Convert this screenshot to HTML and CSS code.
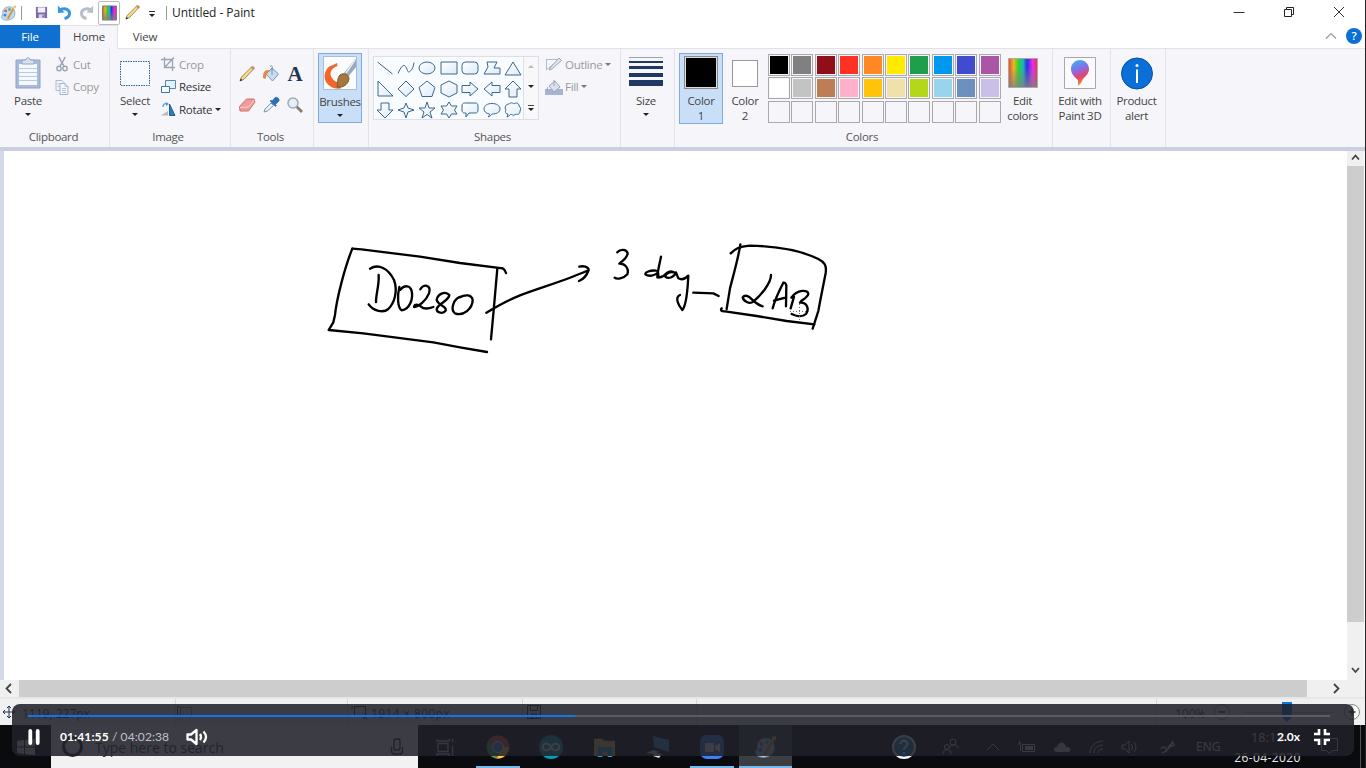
FILE: index.html
```html
<!DOCTYPE html>
<html lang="en">
<head>
<meta charset="utf-8">
<title>Untitled - Paint</title>
<link rel="stylesheet" href="styles.css">
</head>
<body>
<svg class="defs" width="0" height="0" aria-hidden="true">
  <defs>
    <linearGradient id="rain" x1="0" x2="1" y1="0" y2="0"><stop offset="0" stop-color="#e8402a"/><stop offset=".18" stop-color="#f5b623"/><stop offset=".34" stop-color="#2fd32c"/><stop offset=".5" stop-color="#19b8b6"/><stop offset=".64" stop-color="#2a2fe8"/><stop offset=".84" stop-color="#f02be8"/><stop offset="1" stop-color="#e8304a"/></linearGradient>
    <linearGradient id="fade" x1="0" x2="0" y1="0" y2="1"><stop offset=".3" stop-color="#808080" stop-opacity="0"/><stop offset="1" stop-color="#808080" stop-opacity=".8"/></linearGradient>
    <linearGradient id="pin" x1=".2" x2=".5" y1="0" y2="1"><stop offset="0" stop-color="#35b5f0"/><stop offset=".4" stop-color="#8a6be8"/><stop offset=".7" stop-color="#e8426a"/><stop offset="1" stop-color="#f5a623"/></linearGradient>
    <linearGradient id="shp" x1="0" x2="1" y1="0" y2="1"><stop offset="0" stop-color="#fff"/><stop offset="1" stop-color="#dcebf7"/></linearGradient>
    <symbol id="palette" viewBox="0 0 24 24"><path d="M21 13c0 5-4 8-9 9-5 .8-10-1-10-5 0-2 2-2 2-4S3 10 5 7c3-4 9-5 13-2 2 2 3 5 3 8z" fill="#b9dcf2" stroke="#6f9fc4"/><circle cx="8" cy="9" r="2" fill="#e25a4a"/><circle cx="13.500" cy="7" r="2" fill="#5cb85c"/><circle cx="7" cy="15" r="2" fill="#4f7fd8"/><circle cx="12" cy="18" r="2" fill="#f0c040"/><path d="M11 20 19 6" stroke="#e8892e" stroke-width="2.500"/><path d="m18 7 1-5 4-1-1 4z" fill="#e9c577"/></symbol>
    <symbol id="pencil" viewBox="0 0 18 18"><path d="m2 16 1.500-4L14 1.500l2 2L6 14.200z" fill="#f3dc8a" stroke="#86703f" stroke-width=".8"/><path d="m12.800 2.800 2.200 2.200L16.500 3.500c.5-1-1-2.500-2.200-2.200z" fill="#c98a78"/><path d="m1.800 16.200.9-2.600 1.700 1.700z" fill="#333"/></symbol>
  </defs>
</svg>

<div class="screen">
  <header class="titlebar">
    <svg class="app-icon" viewBox="0 0 24 24"><use href="#palette"/></svg>
    <span class="tsep"></span>
    <svg class="q save" viewBox="0 0 14 14"><path d="M1 1h12v12H1z" fill="#7d6aa8"/><path d="M3 1.500h8V7H3z" fill="#f3f0fa"/><path d="M4 9h6v4H4z" fill="#d9d3ea"/><path d="M8 10h1.500v2.500H8z" fill="#665490"/></svg>
    <svg class="q undo" viewBox="0 0 15 15"><path d="M3 5C8 2.500 13 4.500 12.500 9c-.3 2.500-2.500 4-5 4.500" fill="none" stroke="#3997e0" stroke-width="3"/><path d="M.8.5 1 8l6.500-.5z" fill="#3997e0"/></svg>
    <svg class="q redo" viewBox="0 0 15 15"><path d="M12 5C7 2.500 2 4.500 2.500 9c.3 2.500 2.500 4 5 4.500" fill="none" stroke="#b6bfcc" stroke-width="3"/><path d="M14.200.5 14 8l-6.500-.5z" fill="#b6bfcc"/></svg>
    <span class="qbox"><svg viewBox="0 0 16 16"><path d="M.5.500h15v15H.5z" fill="url(#rain)" stroke="#777"/><path d="M1 1h14v14H1z" fill="url(#fade)"/></svg></span>
    <svg class="q qpen" viewBox="0 0 18 18"><use href="#pencil"/></svg>
    <svg class="q qmore" viewBox="0 0 8 8"><path d="M1 1.500h6" stroke="#333"/><path d="M1 4h6L4 7z" fill="#222"/></svg>
    <span class="tsep two"></span>
    <span class="title">Untitled - Paint</span>
    <span class="wbtns">
      <svg viewBox="0 0 12 12"><path d="M.5 6.500h11" stroke="#333"/></svg>
      <svg viewBox="0 0 12 12"><path d="M1.500 3.500h7v7h-7z" fill="none" stroke="#222"/><path d="M3.500 3V1.500h7v7H9" fill="none" stroke="#222"/></svg>
      <svg viewBox="0 0 12 12"><path d="m1 1 10 10M11 1 1 11" stroke="#333"/></svg>
    </span>
  </header>

  <nav class="tabs">
    <span class="tab file">File</span><span class="tab home">Home</span><span class="tab view">View</span>
    <span class="tabs-right">
      <svg width="12" height="8" viewBox="0 0 12 8"><path d="m1 6.500 5-5 5 5" fill="none" stroke="#999" stroke-width="1.200"/></svg>
      <span class="help">?</span>
    </span>
  </nav>

  <section class="ribbon">
    <div class="group g-clip">
      <div class="body">
        <div class="big paste">
          <svg class="bi" viewBox="0 0 34 34"><path d="M5 4h24v28H5z" fill="#a9bbdb" stroke="#90a3c6"/><path d="M8 8h18v21H8z" fill="#f5f8fd"/><path d="M8 12.500h18M8 16.500h18M8 20.500h18M8 24.500h18" stroke="#b8cbe6"/><path d="M11 8V4h4c0-3 4-3 4 0h4v4z" fill="#d7dfec" stroke="#96a5bf"/></svg>
          <span>Paste</span><i class="arr"></i>
        </div>
        <div class="rows cutcopy">
          <div class="row dis"><svg viewBox="0 0 16 16"><path d="M5 1c1 3 3 6 5 9M11 1c-1 3-3 6-5 9" fill="none" stroke="#9ca6b8" stroke-width="1.500"/><circle cx="5" cy="12.500" r="2.200" fill="none" stroke="#9ca6b8" stroke-width="1.400"/><circle cx="11" cy="12.500" r="2.200" fill="none" stroke="#9ca6b8" stroke-width="1.400"/></svg><span>Cut</span></div>
          <div class="row dis"><svg viewBox="0 0 16 16"><path d="M2 1.500h6l2 2v8H2z" fill="#eef2f9" stroke="#b0bbcf"/><path d="M6 4.500h5l3 3v8H6z" fill="#f5f8fc" stroke="#a5b3cb"/><path d="M11 4.500v3h3M8 9.500h4M8 11.500h4M8 13.500h4M3.500 5h2M3.500 7.500h2" fill="none" stroke="#b5c2d8"/></svg><span>Copy</span></div>
        </div>
      </div>
      <div class="label">Clipboard</div>
    </div>

    <div class="group g-image">
      <div class="body">
        <div class="big select">
          <svg class="bi" viewBox="0 0 34 34"><path d="M2.500 5.500h29v24h-29z" fill="#f7fafe" stroke="#2b5c9b" stroke-dasharray="1.500 1"/></svg>
          <span>Select</span><i class="arr"></i>
        </div>
        <div class="rows imgrows">
          <div class="row dis"><svg viewBox="0 0 16 16"><path d="M1 3.500h11.500V15M4.500 1v10.500H15M14 1.500 5 11" fill="none" stroke="#98a4b8" stroke-width="1.300"/></svg><span>Crop</span></div>
          <div class="row"><svg viewBox="0 0 16 16"><path d="M5.500 1.500h10v8h-10z" fill="#e6f1fb" stroke="#4f87b8"/><path d="M1.500 7.500h8v6h-8z" fill="#fafdff" stroke="#3a77ad"/></svg><span>Resize</span></div>
          <div class="row"><svg viewBox="0 0 16 16"><path d="M9.500 3v11.500H15z" fill="#2f7cc0" stroke="#235f98"/><path d="M8 10v4.500H.5z" fill="#b5bac3"/><path d="M3 6c0-3 2-4 4-3" fill="none" stroke="#4b9cdc" stroke-width="1.400"/><path d="m6 1 3 2-3 2z" fill="#4b9cdc"/></svg><span>Rotate</span><i class="arr"></i></div>
        </div>
      </div>
      <div class="label">Image</div>
    </div>

    <div class="group g-tools">
      <div class="toolgrid">
        <svg viewBox="0 0 18 18"><use href="#pencil"/></svg>
        <svg viewBox="0 0 18 18"><path d="m4 9 6-6 6.500 6-6 7z" fill="#c6dff0" stroke="#7598b5"/><path d="M10 3v7M8 1.500c2-2 3 0 2 4" fill="none" stroke="#7598b5"/><path d="M1 13c0-5 1-8 5-8l3 1c-4 1-5 4-5 8z" fill="#e9864a"/></svg>
        <span class="atool">A</span>
        <svg viewBox="0 0 18 18"><path d="m1.500 10.500 7-7.500h7.500l1 3-6.500 9H2z" fill="#ee9c98" stroke="#cd716e"/><path d="m2 11.500 8.500-.5L16.500 4" fill="none" stroke="#fbd0cd"/></svg>
        <svg viewBox="0 0 18 18"><path d="m2 16 1-3 6-6 2.500 2.500-6 5.500z" fill="#e6f0f8" stroke="#8497a8"/><path d="m8 5 5.500 5.500 1-1-1-1L17 5c1-2-2-4.500-4-3.500L10 5 9 4z" fill="#2a70b8" stroke="#205a97" stroke-width=".5"/></svg>
        <svg viewBox="0 0 18 18"><path d="m10.500 10.500 5.500 5.500" stroke="#8c7a68" stroke-width="2.800"/><circle cx="7" cy="7" r="5" fill="#e2f1fa" stroke="#a3aab3" stroke-width="1.500"/></svg>
      </div>
      <div class="label">Tools</div>
    </div>

    <div class="group g-brush">
      <div class="big on">
        <svg class="bi" viewBox="0 0 34 34"><path d="M.5.500h33v33H.5z" fill="#fbfcfe" stroke="#a9bdd6"/><path d="m14 7 .5 3C9 12 6.500 16 8 20c1.500 4 5 6 9 7l1 5.500c-8 1-14-3-16-9C.5 17 4 10 10 9z" fill="#f2652c"/><path d="m21 17 11-14 1 1v7l-8 10z" fill="#99a7bd"/><path d="m23 17 9-13" stroke="#e9eef5" stroke-width="1.500"/><path d="M17 19c4-3 9 0 9 4-1 5-5 9-12 8 1-4 0-9 3-12z" fill="#a3783f" stroke="#7c5728"/></svg>
        <span>Brushes</span><i class="arr"></i>
      </div>
    </div>

    <div class="group g-shapes">
      <div class="shapes-body">
        <div class="gallery">
          <div class="cells">
            <svg viewBox="0 0 18 18"><path d="m1.500 3 15 12"/></svg>
            <svg viewBox="0 0 18 18"><path d="M1 14.500C3 10 6 4 8.500 7.500s2 7.500 5 4.500c2-2 3-5 3.500-8.500" fill="none"/></svg>
            <svg viewBox="0 0 18 18"><ellipse cx="9" cy="9" rx="8" ry="6"/></svg>
            <svg viewBox="0 0 18 18"><path d="M1 3h16v12H1z"/></svg>
            <svg viewBox="0 0 18 18"><rect x="1" y="3" width="16" height="12" rx="3.500"/></svg>
            <svg viewBox="0 0 18 18"><path d="M4 3h10l-3 6h6v6H1l4-7z"/></svg>
            <svg viewBox="0 0 18 18"><path d="m9 3 8 13H1z"/></svg>
            <svg viewBox="0 0 18 18"><path d="M2 1v15h15z"/></svg>
            <svg viewBox="0 0 18 18"><path d="m9 1 8 8-8 7.500L1 9z"/></svg>
            <svg viewBox="0 0 18 18"><path d="m9 1 8 6.500-3 9H4l-3-9z"/></svg>
            <svg viewBox="0 0 18 18"><path d="m9 1 8 4v8l-8 4-8-4V5z"/></svg>
            <svg viewBox="0 0 18 18"><path d="M1 5.500h8V2l8 7-8 7v-3.500H1z"/></svg>
            <svg viewBox="0 0 18 18"><path d="M17 5.500H9V2L1 9l8 7v-3.500h8z"/></svg>
            <svg viewBox="0 0 18 18"><path d="m9 1 8 8h-4v8H5V9H1z"/></svg>
            <svg viewBox="0 0 18 18"><path d="m9 17 8-8h-4V2H5v7H1z"/></svg>
            <svg viewBox="0 0 18 18"><path d="m9 2 2 5 6 2-6 2-2 6-2-6-6-2 6-2z"/></svg>
            <svg viewBox="0 0 18 18"><path d="m9 1 2 6h6l-5 4 2 6-5-3.500L4 17l2-6-5-4h6z"/></svg>
            <svg viewBox="0 0 18 18"><path d="m9 1 2.500 4H17l-2.500 4 2.500 4h-5.500L9 17l-2.500-4H1l2.500-4L1 5h5.500z"/></svg>
            <svg viewBox="0 0 18 18"><path d="M3.500 2h11C16 2 17 3 17 5v4c0 2-1 3-2.500 3H8l-3 4v-4H3.500C2 12 1 11 1 9V5c0-2 1-3 2.500-3z"/></svg>
            <svg viewBox="0 0 18 18"><path d="M5 16c1-1 1.500-2 1.500-3C3 12.500 1 10.500 1 8c0-3.500 3.500-5.500 8-5.500S17 4.500 17 8s-3.500 5-8 5c-1 1-2 2.500-4 3z"/></svg>
            <svg viewBox="0 0 18 18"><path d="M5 3c2-2 4-1 5 0 2-2 5-1 5 2 2 1 2 4 1 5 0 3-2 4-4 3-2 2-4 1-5 0-1 1-2 2-4 3l1-3C1 13 1 10 2 9 0 6 2 3 5 3z"/></svg>
          </div>
          <div class="gscroll"><i class="up"></i><i class="arr sm"></i><i class="more"><b class="arr sm"></b></i></div>
        </div>
        <div class="rows shaperows">
          <div class="row dis"><svg viewBox="0 0 18 16"><path d="M1 3.500h14M1.500 3v11M1 14 15 3" fill="none" stroke="#b4bac8"/><path d="m5 12 9-10 2.500 2.500L7 13l-3 1z" fill="#dfe3ec" stroke="#9fa8b9"/></svg><span>Outline</span><i class="arr"></i></div>
          <div class="row dis"><svg viewBox="0 0 18 16"><path d="M0 10h18v6H0z" fill="#a7b4d0"/><path d="m4 7 6-5 5 6-6 5z" fill="#dbe2ee" stroke="#98a5bd"/><path d="M9 1v6M3 8c-1 1-1 3 0 4" fill="none" stroke="#98a5bd"/></svg><span>Fill</span><i class="arr"></i></div>
        </div>
      </div>
      <div class="label">Shapes</div>
    </div>

    <div class="group g-size">
      <div class="big">
        <svg class="bi" viewBox="0 0 34 34"><path d="M0 1.500h34" stroke="#9aa3b2"/><path d="M0 6h34" stroke="#203864" stroke-width="2"/><path d="M0 11.500h34" stroke="#203864" stroke-width="3"/><path d="M0 19h34" stroke="#203864" stroke-width="4"/><path d="M0 27h34" stroke="#203864" stroke-width="6"/></svg>
        <span>Size</span><i class="arr"></i>
      </div>
    </div>

    <div class="group g-colors">
      <div class="colors-body">
        <div class="big on c1"><b class="sw1"></b><span>Color<br>1</span></div>
        <div class="big c2"><b class="sw2"></b><span>Color<br>2</span></div>
        <div class="swatches">
          <i class="k1"></i><i class="k2"></i><i class="k3"></i><i class="k4"></i><i class="k5"></i><i class="k6"></i><i class="k7"></i><i class="k8"></i><i class="k9"></i><i class="k10"></i>
          <i class="k11"></i><i class="k12"></i><i class="k13"></i><i class="k14"></i><i class="k15"></i><i class="k16"></i><i class="k17"></i><i class="k18"></i><i class="k19"></i><i class="k20"></i>
          <i></i><i></i><i></i><i></i><i></i><i></i><i></i><i></i><i></i><i></i>
        </div>
        <div class="big editc">
          <svg class="bi" viewBox="0 0 34 34"><path d="M2.500 2.500h29v29h-29z" fill="url(#rain)" stroke="#aaa"/><path d="M3 3h28v28H3z" fill="url(#fade)"/></svg>
          <span>Edit<br>colors</span>
        </div>
      </div>
      <div class="label">Colors</div>
    </div>

    <div class="group g-p3d">
      <div class="big">
        <svg class="bi" viewBox="0 0 34 34"><path d="M1.500 1.500h31v31h-31z" fill="#fafafc" stroke="#a8a8a8"/><path d="M17 4c5 0 9 4 9 9 0 4-3 7-6 10-1 2-2 5-5 7v-6c-4-3-7-7-7-11 0-5 4-9 9-9z" fill="url(#pin)"/></svg>
        <span>Edit with<br>Paint 3D</span>
      </div>
    </div>
    <div class="group g-alert">
      <div class="big">
        <svg class="bi" viewBox="0 0 34 34"><circle cx="17" cy="17.500" r="15.500" fill="#0a70d8" stroke="#0b4f9c"/><path d="M17 13.500V27" stroke="#fff" stroke-width="2"/><circle cx="17" cy="9.500" r="1.500" fill="#fff"/></svg>
        <span>Product<br>alert</span>
      </div>
    </div>
  </section>

  <main class="work">
    <svg class="canvas" viewBox="4 151 1343 529">
      <g fill="none" stroke="#000" stroke-width="7" stroke-linecap="round" stroke-linejoin="round">
        <g transform="translate(320 235) scale(.33333)">
          <path d="M97 41C75 95 50 190 45 240l-5 22-14 23 104 10 210 27 80 15 81 14"/>
          <path d="m97 41 28 2 175 22 120 19 128 16q8 4 10 14"/>
          <path d="m532 100-10 115-9 98"/>
          <path d="M150 101c25-16 55-1 72 34 13 35 0 70-17 87-15 13-45 6-59-14M176 120c2 30-8 55-8 81"/>
          <path d="M238 156c-6 25-6 62 7 70 24-2 35-35 30-58-4-17-22-19-34-4"/>
          <path d="M301 163c9-18 34-13 26 12-10 25-32 40-45 41 2-10 12-8 20-2q12 12 38 2"/>
          <path d="M388 180c-13-14-36-2-38 15 5 18 32 18 27 32-7 10-27 8-27-5 5-17 36-24 38-42z"/>
          <path d="M425 184c-25 5-35 40-20 51 25 10 53-15 53-40-3-17-23-17-38-8"/>
          <path d="M499 233c31-18 61-36 101-52 70-26 140-46 200-73M778 95c12-3 27 0 28 10-6 17-16 28-29 33"/>
        </g>
        <g transform="translate(570 235) scale(.33333)">
          <path d="M142 52c8-10 28-10 31 3-1 13-15 23-25 31 17-1 30 14 24 32-12 14-32 15-38 10"/>
          <path d="M273 65c-5 25-10 42-11 62M258 107c-18-2-33 5-32 11 9 7 30 5 38-6l2 16q15-2 22-12c8-8 18-7 24-4-12-3-27 3-26 13 10 9 28 0 32-13l7 18q15 8 30-8c-2 30-3 85-18 103-13-15-23-38-7-45"/>
          <path d="m370 173 60 2 16 8"/>
          <path d="M482 55c13-13 23-20 58-23 70 1 150 13 205 40 20 10 25 20 22 43-7 35-17 85-22 113l-17 53"/>
          <path d="M511 28c-6 42-21 92-31 132l-10 62M455 220c-5 5 0 10 10 9l95 14 90 15 83 10"/>
          <path d="M603 120c0 25-30 60-53 80-12 9-30-2-32-13 5-7 15-6 22 1 12 12 22 22 38 26"/>
          <path d="M608 220c5-20 18-50 32-77q6-2 9 8l-1 63M612 197l37-10"/>
          <path d="M672 185l-10 35M664 188c18-25 51-25 51-11-3 13-25 20-25 26 20-2 29 18 18 34-13 12-35 4-43 0"/>
        </g>
      </g>
      <path d="M790 311.500h20M799.500 301v21" stroke="#777" stroke-dasharray="1 2"/>
    </svg>
    <div class="vscroll">
      <svg viewBox="0 0 17 15"><path d="m5 8.500 3.500-4 3.500 4" fill="none" stroke="#444" stroke-width="1.800"/></svg>
      <i class="vthumb"></i>
      <svg viewBox="0 0 17 15"><path d="m5 5 3.500 4L12 5" fill="none" stroke="#444" stroke-width="1.800"/></svg>
    </div>
  </main>
  <div class="hscroll">
    <svg viewBox="0 0 19 17"><path d="m11 4-4.500 4.500L11 13" fill="none" stroke="#444" stroke-width="1.800"/></svg>
    <i class="hthumb"></i>
    <svg viewBox="0 0 19 17"><path d="m8 4 4.500 4.500L8 13" fill="none" stroke="#444" stroke-width="1.800"/></svg>
  </div>

  <div class="status">
    <div class="st s1"><svg width="14" height="14" viewBox="0 0 14 14"><path d="M7 1v12M1 7h12M5 3l2-2 2 2M5 11l2 2 2-2M3 5 1 7l2 2M11 5l2 2-2 2" fill="none" stroke="#20304c"/></svg><span>1119, 227px</span></div>
    <div class="st s2"><svg width="16" height="14" viewBox="0 0 16 14"><path d="M3.500 2.500h11v9h-11z" fill="none" stroke="#444" stroke-dasharray="1.500 1"/><path d="M.5 1v10M0 1.500h3" stroke="#555"/></svg></div>
    <div class="st s3"><svg width="16" height="14" viewBox="0 0 16 14"><path d="M3.500 1.500h11v10h-11zM1 1v3M12 13h4" fill="none" stroke="#333"/></svg><span>1914 × 800px</span></div>
    <div class="st s4"><svg width="14" height="14" viewBox="0 0 14 14"><path d="M.5.500h13v13H.5zM3.500.5v5h7v-5M4.500 13V9h5v4" fill="none" stroke="#333"/></svg></div>
    <div class="st s5"></div>
    <div class="st s6"><span>100%</span><svg class="zo" width="16" height="16" viewBox="0 0 16 16"><circle cx="8" cy="8" r="7.500" fill="#f7f7f7" stroke="#888"/><path d="M4.500 8h7" stroke="#333" stroke-width="1.500"/></svg><span class="track"><svg width="10" height="20" viewBox="0 0 10 20"><path d="M0 0h10v15l-5 5-5-5z" fill="#0a78e0"/></svg></span><svg width="16" height="16" viewBox="0 0 16 16"><circle cx="8" cy="8" r="7.500" fill="#f7f7f7" stroke="#888"/><path d="M4.500 8h7M8 4.500v7" stroke="#333" stroke-width="1.500"/></svg></div>
  </div>

  <footer class="taskbar">
    <div class="start"><svg width="18" height="16" viewBox="0 0 18 16"><path d="m0 2 7-1v6.500H0zM8 1l10-1v7.500H8zM0 8.500h7V15l-7-1zM8 8.500h10V16L8 15z" fill="#ddd"/></svg></div>
    <div class="search"><i class="cortana"></i><span>Type here to search</span><svg width="14" height="18" viewBox="0 0 14 18"><rect x="4" y="1" width="6" height="11" rx="2" fill="none" stroke="#222" stroke-width="1.300"/><path d="M1.500 9v4c0 2 1 3 3 3h5c2 0 3-1 3-3V9" fill="none" stroke="#222" stroke-width="1.300"/></svg></div>
    <div class="apps">
      <div class="app"><svg width="20" height="18" viewBox="0 0 20 18"><path d="M3 5.500h10v8H3zM2 1v2h12V1M2 18v-2h12v2M17.500 1v3M17.500 8v10" fill="none" stroke="#ccc" stroke-width="1.300"/></svg></div>
      <div class="app run a2"><svg width="24" height="24" viewBox="0 0 24 24"><circle cx="12" cy="12" r="11.500" fill="#e24a3b"/><path d="M12 12 2 7a11.500 11.500 0 0 0 9 16.500z" fill="#35a853"/><path d="M12 12h11a11.500 11.500 0 0 1-12 11.500l3-7z" fill="#f9d13a"/><circle cx="12" cy="12" r="5.500" fill="#4184f3" stroke="#fff"/></svg></div>
      <div class="app"><svg width="24" height="24" viewBox="0 0 24 24"><circle cx="12" cy="12" r="12" fill="#069fb6"/><path d="M12 12c-3-5-8-4-8 0s5 5 8 0 8-4 8 0-5 5-8 0z" fill="none" stroke="#fff" stroke-width="2"/></svg></div>
      <div class="app"><svg width="24" height="20" viewBox="0 0 24 22"><path d="M0 2h9l2 2h12v17H0z" fill="#e9c35b"/><path d="M4 11h16v11h-5v-6H9v6H4z" fill="#2b9de0"/></svg></div>
      <div class="app"><svg width="24" height="24" viewBox="0 0 24 24"><path d="m7 1 16 4v12L8 12z" fill="#3b94e0"/><path d="m0 18 8-3 5 2-3 1 6 1-3 4-6-2 1-2z" fill="#ddd"/></svg></div>
      <div class="app run"><svg width="24" height="24" viewBox="0 0 24 24"><rect width="24" height="24" rx="7" fill="#3b82f6"/><path d="M5 8h9v9H5zM15 11l5-3v9l-5-3z" fill="#fff"/></svg></div>
      <div class="app run act"><svg width="25" height="24" viewBox="0 0 24 24"><use href="#palette"/></svg></div>
    </div>
    <div class="tray">
      <svg class="t1" width="24" height="24" viewBox="0 0 24 24"><circle cx="12" cy="12" r="11" fill="#1583c8" stroke="#fff" stroke-width="2"/><path d="M8.500 9c0-5 7-4 7 0 0 2.500-3.500 3-3.500 6M12 17v2.500" fill="none" stroke="#fff" stroke-width="2.300"/></svg>
      <svg class="t2" width="17" height="17" viewBox="0 0 17 17"><g fill="none" stroke="#ddd"><circle cx="5" cy="9" r="2.500"/><path d="M1 16c0-6 8-6 8 0M8 9c1-3 8-3 8 1"/><circle cx="11" cy="4" r="3"/></g></svg>
      <svg class="t3" width="14" height="9" viewBox="0 0 14 9"><path d="m1 8 6-6 6 6" fill="none" stroke="#ddd"/></svg>
      <svg class="t4" width="18" height="12" viewBox="0 0 18 12"><path d="M4.500 3.500h12v7h-12z" fill="none" stroke="#ddd"/><path d="M7 5h8v4H7z" fill="#ddd"/><path d="M0 3h4M1.500 0v3M2.500 4v6" stroke="#ddd"/></svg>
      <svg class="t5" width="18" height="12" viewBox="0 0 18 12"><path d="M4 11C0 11 0 6 4 6c1-6 8-6 9 0 5-1 6 5 2 5z" fill="#ccc"/></svg>
      <svg class="t6" width="15" height="14" viewBox="0 0 15 14"><path d="M1 13C1 6 7 1 14 1M5 13c0-5 4-8 9-8M9 13c0-2 2-4 5-4" fill="none" stroke="#ddd"/></svg>
      <svg class="t7" width="17" height="14" viewBox="0 0 17 14"><path d="M1 5h3l4-4v12L4 9H1zM10.500 4q2 3 0 6M13 2q4 5 0 10" fill="none" stroke="#ddd"/></svg>
      <svg class="t8" width="16" height="14" viewBox="0 0 16 14"><path d="M2 13c6-2 9-7 11-12M1 9c3-5 7 0 5 3M8 7c3-3 5-5 6-3s-3 3-5 2" fill="none" stroke="#ddd" stroke-width="1.300"/></svg>
      <span class="lang">ENG</span>
      <span class="clock"><span>18:13</span><span>26-04-2020</span></span>
      <svg class="t9" width="17" height="17" viewBox="0 0 17 17"><path d="M.5.500h16v12h-5l-3 3-3-3h-5z" fill="none" stroke="#ddd"/></svg>
      <i class="peek"></i>
    </div>
  </footer>

  <div class="player">
    <div class="progress"><i></i></div>
    <div class="controls">
      <svg width="13" height="16" viewBox="0 0 13 16"><path d="M2.300 2v12M9.700 2v12" stroke="#fff" stroke-width="3.800" stroke-linecap="round"/></svg>
      <span class="time"><b>01:41:55</b> / 04:02:38</span>
      <svg class="vol" width="22" height="18" viewBox="0 0 22 18"><path d="M1.500 6.500H5l5.500-4.500v14L5 11.500H1.500z" fill="none" stroke="#fff" stroke-width="2.300" stroke-linejoin="round"/><path d="M14 6q2 3 0 6M17.500 3.500q5 5.500 0 11" fill="none" stroke="#fff" stroke-width="2.300"/></svg>
      <b class="speed">2.0x</b>
      <svg class="exit" width="16" height="16" viewBox="0 0 16 16"><path d="M5 0v5H0M11 0v5h5M5 16v-5H0M11 16v-5h5" fill="none" stroke="#fff" stroke-width="2.600"/></svg>
    </div>
  </div>
</div>
</body>
</html>
```
FILE: styles.css
```css
* { box-sizing: border-box; }
body { margin: 0; background: #fff; font: 12px/15px "Open Sans", "Noto Sans", sans-serif; color: #444; overflow: hidden; }
svg { display: block; flex: none; }
i { font-style: normal; display: block; }
.defs { position: absolute; }
.screen { width: 1366px; height: 768px; display: flex; flex-direction: column; position: relative; border-right: 1px solid #222; overflow: hidden; }

.titlebar { height: 25px; flex: none; display: flex; align-items: center; background: #fff; }
.app-icon { width: 17px; height: 18px; }
.tsep { width: 1px; height: 14px; background: #999; margin-left: 4px; }
.q { width: 15px; height: 15px; }
.save { width: 13px; height: 13px; margin-left: 13px; }
.undo { margin-left: 9px; }
.redo { margin-left: 7px; }
.qbox { width: 22px; height: 24px; margin-left: 4px; border: 1px solid #bbb; border-radius: 2px; display: flex; align-items: center; justify-content: center; }
.qbox svg { width: 15px; height: 16px; }
.qpen { width: 17px; height: 17px; margin-left: 4px; }
.qmore { width: 8px; height: 8px; margin: 3px 0 0 7px; }
.tsep.two { margin-left: 10px; }
.title { margin-left: 5px; color: #222; letter-spacing: -.05px; }
.wbtns { margin-left: auto; display: flex; gap: 38px; padding: 0 20px 2px 0; }
.wbtns svg { width: 12px; height: 12px; }

.tabs { height: 24px; flex: none; display: flex; background: #fff; border-bottom: 1px solid #e0e2e8; line-height: 24px; font-size: 11.500px; letter-spacing: -.15px; }
.tab { text-align: center; }
.file { width: 60px; background: #0f70cf; color: #fff; line-height: 23px; }
.home { width: 58px; height: 24px; background: #f6f6fa; border: 1px solid #e0e2e8; border-width: 1px 1px 0; line-height: 21px; }
.view { width: 54px; line-height: 23px; }
.tabs-right { margin-left: auto; display: flex; align-items: center; gap: 9px; padding: 0 3px 1px 0; }
.help { width: 16px; height: 16px; border-radius: 50%; background: #0a70d8; color: #fff; font-weight: 600; line-height: 16px; text-align: center; }

.ribbon { height: 102px; flex: none; display: flex; background: #f6f6fa; border-bottom: 4px solid #c9cfe0; font-size: 11.500px; letter-spacing: -.3px; }
.group { height: 98px; display: flex; flex-direction: column; position: relative; border-right: 1px solid #e3e4ea; }
.g-clip { width: 110px; } .g-image { width: 121px; } .g-tools { width: 83px; } .g-brush { width: 55px; padding: 4px 6px 0 4px; }
.g-shapes { width: 252px; } .g-size { width: 54px; } .g-colors { width: 378px; } .g-p3d { width: 58px; } .g-alert { width: 55px; }
.label { margin-top: auto; height: 20px; line-height: 19px; text-align: center; color: #555; }
.g-clip .label { padding-right: 2px; } .g-image .label { padding-right: 4px; } .g-tools .label { padding-right: 3px; } .g-shapes .label { padding-right: 4px; } .g-colors .label { padding-right: 3px; }
.body, .shapes-body, .colors-body { display: flex; }
.big { display: flex; flex-direction: column; align-items: center; padding-top: 7px; text-align: center; }
.big span { margin-top: 3px; white-space: nowrap; }
.bi { width: 34px; height: 34px; }
.arr { border: 3px solid transparent; border-top-color: #222; border-bottom: 0; height: 0; width: 0; }
.big .arr { margin-top: 5px; }
.paste { width: 56px; }
.rows { padding-top: 4px; }
.row { height: 22.5px; display: flex; align-items: center; color: #333; white-space: nowrap; }
.row svg { width: 16px; height: 16px; }
.row span { margin-left: 3px; }
.row .arr { margin-left: 3px; }
.dis { color: #999; }
.dis .arr { border-top-color: #777; }
.cutcopy { margin-left: -2px; }
.cutcopy .row span { margin-left: 3px; }
.select { width: 50px; }
.toolgrid { display: grid; grid-template-columns: repeat(3, 24px); grid-auto-rows: 31px; padding: 9px 0 0 4px; justify-items: center; align-items: center; }
.toolgrid svg { width: 18px; height: 18px; }
.atool { font: bold 21px/24px "Liberation Serif", serif; color: #223454; }
.on { background: #c9dff7; border: 1px solid #7fabdc; }
.g-brush .big { width: 44px; height: 70px; padding: 2px 0 0 0; }
.g-brush .big span { margin-top: 4px; }
.gallery { width: 166px; height: 64px; margin: 7px 0 0 4px; border: 1px solid #dcdfe6; background: #fff; display: flex; }
.cells { width: 150px; height: 62px; display: grid; grid-template-columns: repeat(7, 21.4px); grid-auto-rows: 21px; justify-items: center; align-items: center; background: #f9fcff; border-right: 1px solid #dcdfe6; }
.cells svg { width: 18px; height: 18px; fill: url(#shp); stroke: #3c6690; stroke-width: 1; }
.gscroll { flex: 1; display: flex; flex-direction: column; justify-content: space-around; align-items: center; background: #f8f8fb; }
.up { border: 3px solid transparent; border-bottom-color: #bbb; border-top: 0; }
.more { border-top: 1px solid #444; padding-top: 2px; }
.more .arr { display: block; }
.shaperows { padding-left: 6px; }
.shaperows .row svg { width: 18px; }
.shaperows .row span { margin-left: 2px; }
.g-size .big { padding-right: 3px; }
.colors-body { padding-top: 4px; }
.c1 { width: 44px; height: 71px; margin-left: 4px; padding-top: 2px; }
.sw1 { width: 34px; height: 35px; background: #000; border: 1px solid #888; box-shadow: inset 0 0 0 1px #ddd; }
.c1 span { margin-top: 4px; }
.c2 { width: 44px; padding-top: 7px; }
.sw2 { width: 26px; height: 27px; background: #fff; border: 1px solid #999; }
.c2 span { margin-top: 6px; }
.swatches { display: grid; grid-template-columns: repeat(10, 22px); grid-auto-rows: 22px; gap: 1.4px; margin: 1px 0 0 1px; }
.swatches i { border: 1px solid #aaa; padding: 1px; background-clip: content-box; }
.k1 { background: #000; } .k2 { background: #808080; } .k3 { background: #900e18; } .k4 { background: #ff3024; } .k5 { background: #ff8724; }
.k6 { background: #ffea00; } .k7 { background: #1e9f4d; } .k8 { background: #0097ee; } .k9 { background: #414bd0; } .k10 { background: #aa55a5; }
.k11 { background: #fff; } .k12 { background: #c3c3c3; } .k13 { background: #bd7d55; } .k14 { background: #ffb0cb; } .k15 { background: #ffc40a; }
.k16 { background: #f0e0aa; } .k17 { background: #b5d719; } .k18 { background: #98d5ed; } .k19 { background: #6d90be; } .k20 { background: #cac0e7; }
.editc { width: 46px; padding-top: 3px; margin-left: -1px; }
.g-p3d .big, .g-alert .big { padding-right: 3px; }

.work { height: 529px; flex: none; display: flex; border-left: 4px solid #d3d9e9; background: #fff; }
.canvas { width: 1343px; height: 529px; }
.vscroll { width: 17px; background: #f0f0f0; display: flex; flex-direction: column; justify-content: space-between; align-items: center; }
.vscroll svg { width: 17px; height: 15px; }
.vscroll svg:last-child { margin-bottom: 2px; }
.vthumb { width: 17px; height: 456px; background: #cdcdcd; margin-bottom: auto; }
.hscroll { height: 17px; flex: none; display: flex; background: #f0f0f0; }
.hscroll svg { width: 19px; height: 17px; }
.hthumb { width: 1288px; background: #cdcdcd; margin-right: 19px; }

.status { height: 28px; flex: none; display: flex; background: #f0f0f0; border-top: 2px solid #e6e6e6; color: #333; }
.st { height: 26px; display: flex; align-items: center; border-right: 1px solid #d5d5d5; }
.st span { margin-top: 2px; }
.s1 { width: 176px; padding-left: 2px; gap: 6px; } .s2 { width: 172px; padding-left: 1px; } .s3 { width: 175px; padding-left: 3px; gap: 4px; letter-spacing: .35px; }
.s4 { width: 174px; padding-left: 4px; } .s5 { width: 460px; } .s6 { width: 208px; padding-left: 18px; border: 0; }
.zo { margin-left: 8px; }
.st .track { width: 90px; margin: 0 12px 0 12px; height: 1px; background: #bbb; display: flex; align-items: center; justify-content: center; }

.taskbar { height: 43px; flex: none; display: flex; background: #0a0b0e; color: #e8e8e8; }
.start { width: 51px; padding: 14px 0 0 17px; }
.search { width: 367px; background: #f2f2f2; display: flex; align-items: center; color: #333; font-size: 14px; padding: 0 14px 0 11px; }
.search span { margin: 2px auto 0 12px; }
.cortana { width: 21px; height: 21px; border: 3px solid #222; border-radius: 50%; }
.apps { display: flex; }
.app { width: 53.500px; height: 43px; display: flex; align-items: center; justify-content: center; }
.app.run { box-shadow: inset 0 -2px #76b9ed; border: solid #0a0b0e; border-width: 0 5px; }
.app.act { background: #3c3e42; border: 0; }
.app:first-child { width: 53px; }
.tray { display: flex; flex: 1; align-items: center; padding-left: 100px; }
.t2 { margin-left: 26px; } .t3 { margin-left: 27px; } .t4 { margin-left: 18px; } .t5 { margin-left: 17px; } .t6 { margin-left: 18px; } .t7 { margin-left: 17px; } .t8 { margin-left: 22px; }
.lang { margin-left: 20px; font-size: 12px; }
.clock { width: 68px; margin-left: 13px; height: 43px; display: flex; flex-direction: column; align-items: center; padding-top: 3px; line-height: 20px; letter-spacing: .4px; white-space: nowrap; }
.t9 { margin-left: 20px; }
.peek { width: 1px; height: 43px; background: #555; margin-left: auto; margin-right: 4px; }

.player { position: absolute; left: 12px; top: 704px; width: 1342px; height: 52px; border-radius: 8px; background: rgba(32, 33, 41, .87); color: #fff; font: 12px/20px Lato, sans-serif; padding: 11px 24px 0 16px; }
.progress { height: 2px; background: #5b5c66; }
.progress i { width: 547px; height: 2px; background: #1473e6; }
.controls { display: flex; align-items: center; height: 40px; }
.time { margin-left: 19px; color: #c0c0cc; width: 109px; white-space: nowrap; letter-spacing: .1px; }
.time b { color: #fff; }
.vol { margin-left: 17px; }
.speed { margin-left: auto; }
.exit { margin-left: 14px; }
```
